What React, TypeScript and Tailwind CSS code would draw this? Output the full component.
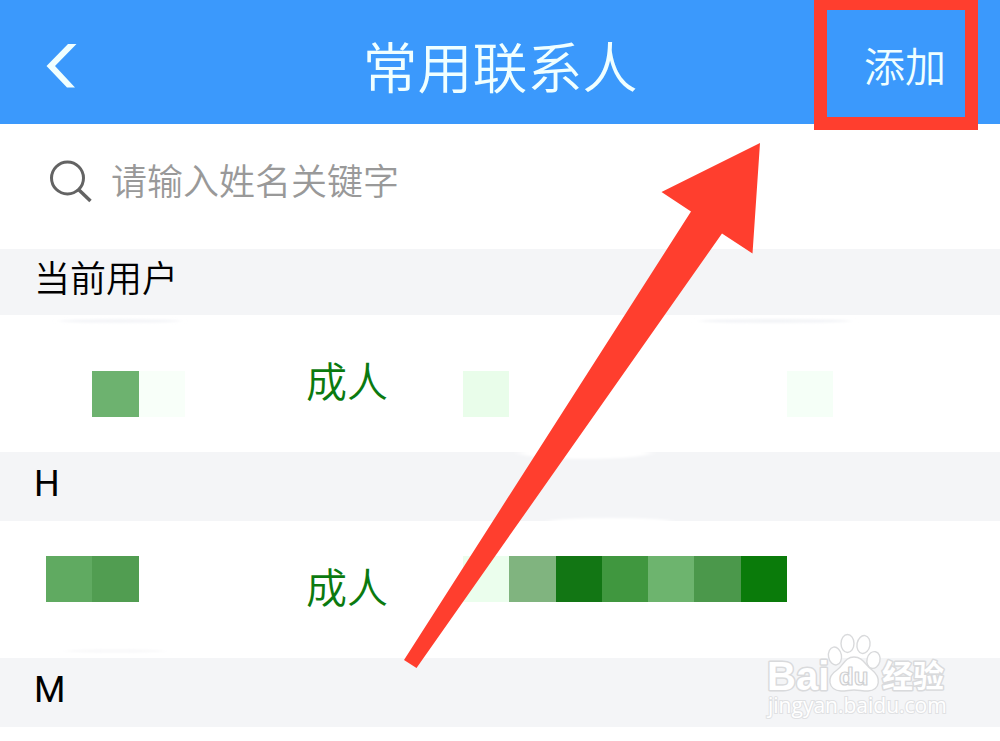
type Tile = { id: string; color: string };

const tiles = (prefix: string, colors: string[]): Tile[] =>
  colors.map((color, i) => ({ id: `${prefix}${i}`, color }));

const userName = tiles("un", ["bg-transparent", "bg-[#6db26f]", "bg-[#f8fff9]"]);
const userId = tiles("ui", [
  "bg-[#e9fdea]",
  "bg-transparent",
  "bg-transparent",
  "bg-transparent",
  "bg-transparent",
  "bg-transparent",
  "bg-transparent",
  "bg-[#f5fff7]",
]);
const hName = tiles("hn", ["bg-[#60aa61]", "bg-[#519d51]", "bg-transparent"]);
const hId = tiles("hi", [
  "bg-[#ebfeed]",
  "bg-[#80b47f]",
  "bg-[#127614]",
  "bg-[#40973f]",
  "bg-[#6db46e]",
  "bg-[#4b984b]",
  "bg-[#0a7b0a]",
  "bg-transparent",
]);

function SectionTitle({ children }: { children: string }) {
  return (
    <h2 className="flex h-[69px] items-center bg-[#f4f5f7] pb-[6px] pl-[34px] font-['Roboto','Noto_Sans_CJK_SC',sans-serif] text-[36px] leading-[48px] font-normal text-black">
      {children}
    </h2>
  );
}

function ContactRow({ name, id, low }: { name: Tile[]; id: Tile[]; low?: boolean }) {
  const shift = low ? "mt-5" : "mb-[22px]";
  return (
    <div className="flex h-[137px] items-center bg-white pl-[46px]">
      <div className="w-[260px] shrink-0">
        <div className={`grid w-[139px] grid-cols-3 ${shift}`}>
          {name.map((t) => (
            <span key={t.id} className={`h-[46px] ${t.color}`} />
          ))}
        </div>
      </div>
      <span className="w-[157px] shrink-0 pb-[10px] text-[41px] leading-[56px] font-[350] text-[#0b7a0f]">成人</span>
      <div className={`grid w-[370px] grid-cols-8 ${shift}`}>
        {id.map((t) => (
          <span key={t.id} className={`h-[46px] ${t.color}`} />
        ))}
      </div>
    </div>
  );
}

function ArrowOverlay() {
  return (
    <svg
      className="pointer-events-none absolute top-0 left-0"
      width="1000"
      height="741"
      viewBox="0 0 1000 741"
      aria-hidden="true"
    >
      <defs>
        <filter id="soft" x="-10%" y="-100%" width="120%" height="300%">
          <feGaussianBlur stdDeviation="4 1" />
        </filter>
      </defs>
      <g filter="url(#soft)">
        <ellipse cx="120" cy="321" rx="60" ry="2" fill="#f4f5f8" />
        <ellipse cx="775" cy="321" rx="75" ry="2" fill="#f3f4f7" />
        <ellipse cx="115" cy="651" rx="50" ry="1.5" fill="#f8f8f9" />
        <ellipse cx="585" cy="453" rx="65" ry="6" fill="#ffffff" />
        <ellipse cx="610" cy="521" rx="60" ry="3" fill="#ffffff" />
      </g>
      <path
        d="M760 143 L661.5 192 L691 211.5 L404 660 L416.5 668 L722 233.5 L752.5 253.5 Z"
        fill="#ff3e2e"
      />
    </svg>
  );
}

function Watermark() {
  return (
    <svg
      className="pointer-events-none absolute top-[630px] left-[760px]"
      width="200"
      height="95"
      viewBox="0 0 200 95"
      role="img"
      aria-label="Baidu 经验"
    >
      <g fill="#ffffff" stroke="#d9dadc" strokeWidth="1.4" strokeLinejoin="round">
        <g strokeWidth="3" style={{ paintOrder: "stroke" }}>
          <text x="7" y="60" fontSize="40" fontWeight="700" fontFamily="Liberation Sans, sans-serif">
            Bai
          </text>
          <text x="122" y="57" fontSize="31" fontWeight="700" fontFamily="Noto Sans CJK SC, sans-serif">
            经验
          </text>
        </g>
        <ellipse cx="75" cy="26" rx="6.5" ry="9" transform="rotate(-10 75 26)" />
        <ellipse cx="87.5" cy="13.5" rx="6.5" ry="9" />
        <ellipse cx="103.5" cy="14.5" rx="6.5" ry="9" transform="rotate(10 103.5 14.5)" />
        <ellipse cx="113.5" cy="30" rx="6.5" ry="8.5" transform="rotate(14 113.5 30)" />
        <path d="M94 27 C85 27 83 36 77 40 C66 47 68 60 81 61 C87 61 89 60 94 60 C99 60 102 61 108 61 C121 60 121 47 112 40 C105 35 103 27 94 27 Z" />
        <text x="79" y="55" fontSize="24" fontWeight="700" fontFamily="Liberation Sans, sans-serif" fill="#fbfbfc" stroke="#cfd0d2" strokeWidth="1.2">
          du
        </text>
      </g>
      <text
        x="8"
        y="83"
        fontSize="21"
        fontFamily="Open Sans, sans-serif"
        fill="#ffffff"
        stroke="#e0e1e3"
        strokeWidth="2"
        style={{ paintOrder: "stroke" }}
      >
        jingyan.baidu.com
      </text>
    </svg>
  );
}

export default function App() {
  return (
    <div className="relative min-h-screen overflow-x-hidden bg-white font-['Noto_Sans_CJK_SC',sans-serif]">
      <header className="relative flex h-[124px] items-center justify-between bg-[#3b99fc] pr-[54px] pl-[46px] text-[#f0ffff]">
        <button type="button" aria-label="返回" className="mt-[8px] w-[90px]">
          <svg width="31" height="44" viewBox="0 0 31 44" aria-hidden="true">
            <path d="M22 0 L30.5 0 L9 22 L29 43.5 L21 43.5 L0.5 22 Z" fill="currentColor" />
          </svg>
        </button>
        <h1 className="mt-[4px] text-[55px] leading-[80px] font-[350]">常用联系人</h1>
        <button type="button" className="mt-[4px] text-[41px] leading-[60px] font-[350]">
          添加
        </button>
        <div className="pointer-events-none absolute top-0 right-[22px] h-[130px] w-[164px] border-[13px] border-t-[10px] border-[#ff3e2e]" />
      </header>

      <main>
        <label className="flex h-[125px] items-center pr-8 pb-[12px] pl-[49px]">
          <svg width="44" height="44" viewBox="0 0 44 44" fill="none" stroke="#636363" strokeWidth="3" className="shrink-0" aria-hidden="true">
            <circle cx="18.5" cy="19" r="16" />
            <path d="M29.5 30.5 L41.5 42" strokeWidth="3.5" />
          </svg>
          <input
            type="text"
            aria-label="姓名关键字"
            placeholder="请输入姓名关键字"
            className="ml-[18px] min-w-0 flex-1 pb-[4px] text-[36px] leading-[52px] font-[350] text-black outline-none placeholder:text-[#999999]"
          />
        </label>

        <h2 className="flex h-[66px] items-center bg-[#f4f5f7] pb-[12px] pl-[34px] text-[36px] leading-[48px] font-[350] text-black">
          当前用户
        </h2>
        <ContactRow name={userName} id={userId} low />
        <SectionTitle>H</SectionTitle>
        <ContactRow name={hName} id={hId} />
        <SectionTitle>M</SectionTitle>
      </main>

      <ArrowOverlay />
      <Watermark />
    </div>
  );
}
